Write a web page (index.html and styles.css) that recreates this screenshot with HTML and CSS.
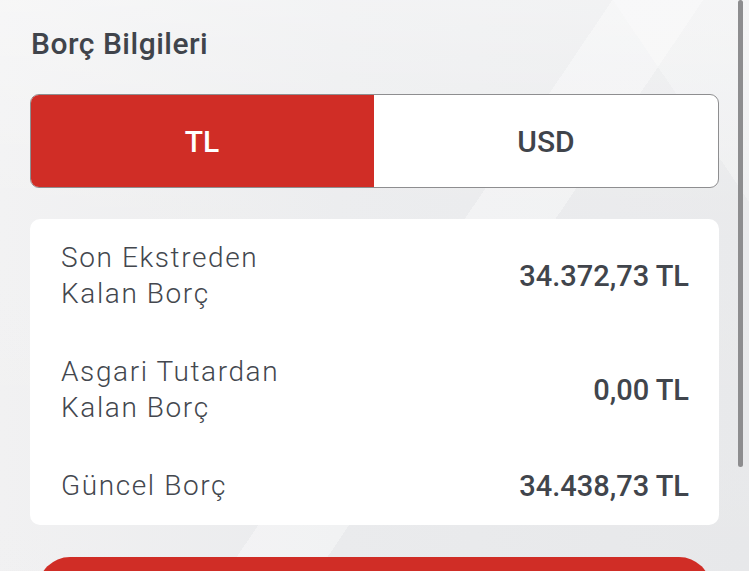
FILE: index.html
```html
<!DOCTYPE html>
<html lang="tr">
<head>
<meta charset="utf-8">
<title>Borç Bilgileri</title>
<link rel="stylesheet" href="styles.css">
</head>
<body>
<div class="screen">
  <h2 class="title">Borç Bilgileri</h2>
  <div class="seg">
    <div class="seg-item active">TL</div>
    <div class="seg-item">USD</div>
  </div>
  <div class="card">
    <div class="row">
      <div class="label">Son Ekstreden<br>Kalan Borç</div>
      <div class="value">34.372,73 TL</div>
    </div>
    <div class="row">
      <div class="label">Asgari Tutardan<br>Kalan Borç</div>
      <div class="value">0,00 TL</div>
    </div>
    <div class="row">
      <div class="label">Güncel Borç</div>
      <div class="value">34.438,73 TL</div>
    </div>
  </div>
  <div class="cta"></div>
  <div class="scrollbar"></div>
</div>
</body>
</html>
```
FILE: styles.css
```css
html, body {
  margin: 0;
  padding: 0;
}
body {
  width: 749px;
  height: 571px;
  overflow: hidden;
  font-family: Roboto, "Liberation Sans", sans-serif;
  color: #3f434a;
}
.screen {
  position: relative;
  width: 749px;
  height: 571px;
  box-sizing: border-box;
  padding: 0 30px;
  overflow: hidden;
  background-color: #e8e9eb;
  background-image:
    linear-gradient(124deg, transparent 0 54%, rgba(255,255,255,0.35) 54% 62%, transparent 62%),
    linear-gradient(236deg, rgba(255,255,255,0.25) 0 12%, transparent 12%),
    linear-gradient(180deg, rgba(255,255,255,0.45) 0, rgba(255,255,255,0.15) 35%, rgba(255,255,255,0.05) 100%),
    linear-gradient(90deg, #f0f0f1 0, #e9eaec 45%, #e6e7e9 100%);
}
.title {
  margin: 26px 0 0 1px;
  font-size: 30px;
  line-height: 36px;
  font-weight: 500;
  letter-spacing: 0.5px;
  color: #40444b;
}
.seg {
  margin-top: 32px;
  height: 94px;
  display: flex;
  box-sizing: border-box;
  border: 1px solid #8e8e90;
  border-radius: 9px;
  background: #fff;
  overflow: hidden;
}
.seg-item {
  flex: 1;
  display: flex;
  align-items: center;
  justify-content: center;
  font-size: 30px;
  font-weight: 500;
  color: #40444b;
}
.seg-item.active {
  margin: -1px 0 -1px -1px;
  background: #d02d26;
  color: #fff;
}
.card {
  margin-top: 31px;
  background: #fff;
  border-radius: 10px;
  padding: 21px 30px 21px 31px;
  display: flex;
  flex-direction: column;
  gap: 42px;
}
.row {
  display: flex;
  align-items: center;
  justify-content: space-between;
}
.label {
  font-size: 28px;
  line-height: 36px;
  font-weight: 300;
  letter-spacing: 1.6px;
  color: #43474e;
}
.value {
  font-size: 29px;
  font-weight: 500;
  color: #41454c;
}
.cta {
  margin: 32px 8px 0;
  height: 90px;
  background: #d02d26;
  border-radius: 32px;
}
.scrollbar {
  position: absolute;
  top: 0;
  left: 738px;
  width: 5px;
  height: 467px;
  border-radius: 3px;
  background: #8d8d8f;
}
```
